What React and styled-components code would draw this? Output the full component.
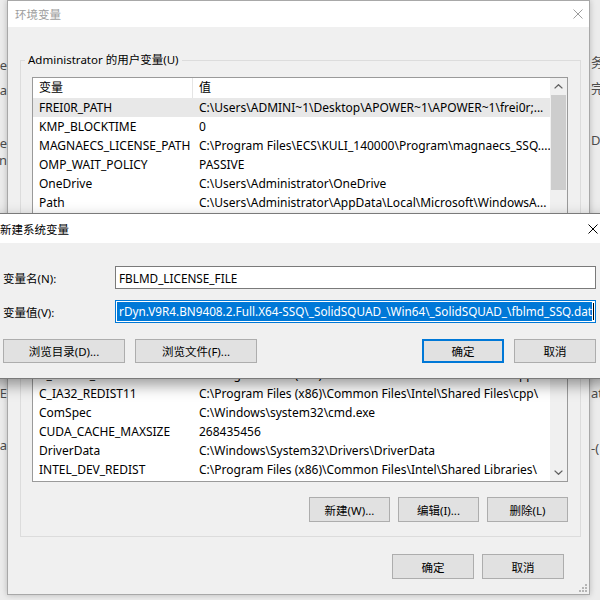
import React from 'react';
import styled, { createGlobalStyle } from 'styled-components';

const GlobalStyle = createGlobalStyle`
  html, body {
    margin: 0;
    padding: 0;
  }
  body {
    font-family: 'Noto Sans', 'Noto Sans CJK SC', sans-serif;
    font-size: 11.5px;
    color: #000;
  }
`;

const Desktop = styled.div`
  position: relative;
  width: 600px;
  height: 600px;
  overflow: hidden;
  background: #ececec;
  display: flex;
  justify-content: space-between;
`;

const Peek = styled.div`
  width: ${(p) => p.$w}px;
  display: flex;
  flex-direction: column;
  align-items: ${(p) => (p.$left ? 'flex-end' : 'flex-start')};
  overflow: hidden;
  color: #4d4d4d;
  font-size: 13px;
  line-height: 16px;
`;

const PeekLine = styled.div`
  margin-top: ${(p) => p.$mt}px;
  white-space: nowrap;
`;

const Window = styled.div`
  position: absolute;
  left: ${(p) => p.$x}px;
  top: ${(p) => p.$y}px;
  width: ${(p) => p.$w}px;
  height: ${(p) => p.$h}px;
  box-sizing: border-box;
  display: flex;
  flex-direction: column;
  background: #f0f0f0;
  border: 1px solid ${(p) => (p.$active ? '#7a7a7a' : '#a8a8a8')};
  box-shadow: ${(p) =>
    p.$active ? '0 6px 14px rgba(0, 0, 0, 0.4)' : '0 0 6px rgba(0, 0, 0, 0.22)'};
`;

const TitleBar = styled.div`
  flex-shrink: 0;
  height: ${(p) => p.$h}px;
  background: #fff;
  display: flex;
  align-items: center;
  justify-content: space-between;
  padding-left: ${(p) => p.$pl}px;
  color: ${(p) => (p.$active ? '#000' : '#9d9d9d')};
  white-space: nowrap;
`;

const CloseGlyph = styled.svg`
  margin-right: ${(p) => p.$mr}px;
  flex-shrink: 0;
`;

const MainBody = styled.div`
  flex: 1;
  display: flex;
  flex-direction: column;
  padding: 0 8px 0 12px;
`;

const GroupBox = styled.fieldset`
  margin: ${(p) => p.$mt}px 0 0;
  padding: 0 12px ${(p) => p.$pb}px 11px;
  border: 1px solid #dcdcdc;
  min-width: 0;
  display: flex;
  flex-direction: column;
`;

const Legend = styled.legend`
  padding: 0 3px;
  margin-left: -7px;
  line-height: 16px;
  white-space: nowrap;
`;

const ListBox = styled.div`
  box-sizing: border-box;
  height: ${(p) => p.$h}px;
  margin-top: ${(p) => p.$mt}px;
  border: 1px solid #9a9a9a;
  background: #fff;
  display: flex;
  overflow: hidden;
  font-size: 12px;
`;

const ListBody = styled.div`
  flex: 1;
  min-width: 0;
  display: flex;
  flex-direction: column;
  overflow: hidden;
`;

const HeaderRow = styled.div`
  flex-shrink: 0;
  display: grid;
  grid-template-columns: 160px 1fr;
  height: 20px;
  line-height: 20px;
`;

const HeaderCell = styled.div`
  box-sizing: border-box;
  padding-left: 6px;
  border-right: ${(p) => (p.$divider ? '1px solid #e5e5e5' : 'none')};
`;

const Row = styled.div`
  flex-shrink: 0;
  display: grid;
  grid-template-columns: 160px 1fr;
  height: 19px;
  line-height: 19px;
  background: ${(p) => (p.$selected ? '#e8e8e8' : 'transparent')};
`;

const Cell = styled.div`
  padding-left: 6px;
  white-space: nowrap;
  overflow: hidden;
`;

const ScrollBar = styled.div`
  width: 17px;
  flex-shrink: 0;
  background: #f0f0f0;
  display: flex;
  flex-direction: column;
`;

const ArrowBox = styled.div`
  height: 17px;
  flex-shrink: 0;
  display: flex;
  align-items: center;
  justify-content: center;
`;

const Track = styled.div`
  flex: 1;
  display: flex;
  flex-direction: column;
  padding-top: ${(p) => p.$offset}px;
`;

const Thumb = styled.div`
  height: ${(p) => p.$h}px;
  margin: 0 1px;
  background: #cdcdcd;
`;

const ButtonRow = styled.div`
  display: flex;
  justify-content: flex-end;
  gap: ${(p) => p.$gap}px;
  margin-top: ${(p) => p.$mt}px;
  padding-right: ${(p) => p.$pr || 0}px;
`;

const Button = styled.button`
  box-sizing: border-box;
  width: ${(p) => p.$w}px;
  height: ${(p) => p.$h}px;
  padding: 0;
  margin: 0;
  margin-left: ${(p) => (p.$push ? 'auto' : '0')};
  background: #e1e1e1;
  border: ${(p) => (p.$default ? '2px solid #0078d7' : '1px solid #adadad')};
  font: inherit;
  color: #000;
  white-space: nowrap;
`;

const DialogBody = styled.div`
  flex: 1;
  display: flex;
  flex-direction: column;
  padding: 23px 13px 0 14px;
`;

const Form = styled.div`
  display: grid;
  grid-template-columns: 112px 1fr;
  row-gap: 11px;
  align-items: center;
`;

const Label = styled.div`
  white-space: nowrap;
`;

const Field = styled.div`
  box-sizing: border-box;
  height: 23px;
  display: flex;
  align-items: center;
  background: #fff;
  border: 1px solid ${(p) => (p.$focused ? '#0078d7' : '#7a7a7a')};
  padding: ${(p) => (p.$focused ? '1px' : '0 3px')};
  overflow: hidden;
  white-space: nowrap;
  font-size: 11.75px;
`;

const Selection = styled.div`
  flex: 1;
  min-width: 0;
  height: 19px;
  line-height: 19px;
  display: flex;
  justify-content: flex-end;
  overflow: hidden;
  background: #0078d7;
  color: #fff;
`;

const Caret = styled.div`
  width: 1px;
  height: 17px;
  margin-left: 1px;
  background: #000;
  flex-shrink: 0;
`;

const Grip = styled.svg`
  position: absolute;
  right: 2px;
  bottom: 2px;
`;

const userVars = [
  ['FREI0R_PATH', 'C:\\Users\\ADMINI~1\\Desktop\\APOWER~1\\APOWER~1\\frei0r;...'],
  ['KMP_BLOCKTIME', '0'],
  ['MAGNAECS_LICENSE_PATH', 'C:\\Program Files\\ECS\\KULI_140000\\Program\\magnaecs_SSQ....'],
  ['OMP_WAIT_POLICY', 'PASSIVE'],
  ['OneDrive', 'C:\\Users\\Administrator\\OneDrive'],
  ['Path', 'C:\\Users\\Administrator\\AppData\\Local\\Microsoft\\WindowsA...'],
  ['TEMP', 'C:\\Users\\Administrator\\AppData\\Local\\Temp'],
  ['TMP', 'C:\\Users\\Administrator\\AppData\\Local\\Temp'],
];

const systemVars = [
  ['asl.log', 'Destination=file'],
  ['CAMPUS_LICENSE', 'C:\\Program Files\\Campus\\license.dat'],
  ['C_EM64T_REDIST11', 'C:\\Program Files (x86)\\Common Files\\Intel\\Shared Files\\cpp\\'],
  ['C_IA32_REDIST11', 'C:\\Program Files (x86)\\Common Files\\Intel\\Shared Files\\cpp\\'],
  ['ComSpec', 'C:\\Windows\\system32\\cmd.exe'],
  ['CUDA_CACHE_MAXSIZE', '268435456'],
  ['DriverData', 'C:\\Windows\\System32\\Drivers\\DriverData'],
  ['INTEL_DEV_REDIST', 'C:\\Program Files (x86)\\Common Files\\Intel\\Shared Libraries\\'],
];

const Chevron = ({ up }) => (
  <svg width="9" height="5" viewBox="0 0 9 5">
    <path
      d={up ? 'M0.6 4.4 L4.5 0.7 L8.4 4.4' : 'M0.6 0.6 L4.5 4.3 L8.4 0.6'}
      fill="none"
      stroke="#606060"
      strokeWidth="1.3"
    />
  </svg>
);

const CloseX = ({ color, mr }) => (
  <CloseGlyph $mr={mr} width="10" height="10" viewBox="0 0 10 10">
    <path d="M0.5 0.5 L9.5 9.5 M9.5 0.5 L0.5 9.5" stroke={color} strokeWidth="1" />
  </CloseGlyph>
);

const VarList = ({ rows, height, mt, thumbOffset, thumbHeight, selected }) => (
  <ListBox $h={height} $mt={mt}>
    <ListBody>
      <HeaderRow>
        <HeaderCell $divider>变量</HeaderCell>
        <HeaderCell>值</HeaderCell>
      </HeaderRow>
      {rows.map(([name, value], i) => (
        <Row key={name} $selected={i === selected}>
          <Cell>{name}</Cell>
          <Cell>{value}</Cell>
        </Row>
      ))}
    </ListBody>
    <ScrollBar>
      <ArrowBox>
        <Chevron up />
      </ArrowBox>
      <Track $offset={thumbOffset}>
        <Thumb $h={thumbHeight} />
      </Track>
      <ArrowBox>
        <Chevron />
      </ArrowBox>
    </ScrollBar>
  </ListBox>
);

const App = () => {
  return (
    <>
      <GlobalStyle />
      <Desktop>
        <Peek $w={7} $left>
          <PeekLine $mt={57}>Name</PeekLine>
          <PeekLine $mt={9}>Data</PeekLine>
          <PeekLine $mt={37}>Re</PeekLine>
          <PeekLine $mt={1}>Run</PeekLine>
          <PeekLine $mt={217}>FILE</PeekLine>
          <PeekLine $mt={36}>Data</PeekLine>
        </Peek>
        <Peek $w={9}>
          <PeekLine $mt={54}>务</PeekLine>
          <PeekLine $mt={10}>完</PeekLine>
          <PeekLine $mt={36}>D</PeekLine>
          <PeekLine $mt={237}>at</PeekLine>
          <PeekLine $mt={39}>-(</PeekLine>
        </Peek>

        <Window $x={7} $y={0} $w={583} $h={595}>
          <TitleBar $h={26} $pl={7}>
            环境变量
            <CloseX color="#9d9d9d" mr={6} />
          </TitleBar>
          <MainBody>
            <GroupBox $mt={25} $pb={10}>
              <Legend>Administrator 的用户变量(U)</Legend>
              <VarList
                rows={userVars}
                height={154}
                mt={9}
                thumbOffset={0}
                thumbHeight={95}
                selected={0}
              />
              <ButtonRow $gap={8} $mt={10}>
                <Button $w={81} $h={25}>新建(N)...</Button>
                <Button $w={81} $h={25}>编辑(E)...</Button>
                <Button $w={81} $h={25}>删除(D)</Button>
              </ButtonRow>
            </GroupBox>

            <GroupBox $mt={6} $pb={14}>
              <Legend>系统变量(S)</Legend>
              <VarList
                rows={systemVars}
                height={176}
                mt={7}
                thumbOffset={4}
                thumbHeight={40}
                selected={-1}
              />
              <ButtonRow $gap={8} $mt={15}>
                <Button $w={81} $h={25}>新建(W)...</Button>
                <Button $w={81} $h={25}>编辑(I)...</Button>
                <Button $w={81} $h={25}>删除(L)</Button>
              </ButtonRow>
            </GroupBox>

            <ButtonRow $gap={8} $mt={17} $pr={17}>
              <Button $w={82} $h={25}>确定</Button>
              <Button $w={82} $h={25}>取消</Button>
            </ButtonRow>
          </MainBody>
          <Grip width="8" height="8" viewBox="0 0 8 8">
            <g fill="#b5b5b5">
              <rect x="6" y="0" width="2" height="2" />
              <rect x="3" y="3" width="2" height="2" />
              <rect x="6" y="3" width="2" height="2" />
              <rect x="0" y="6" width="2" height="2" />
              <rect x="3" y="6" width="2" height="2" />
              <rect x="6" y="6" width="2" height="2" />
            </g>
          </Grip>
        </Window>

        <Window $x={-12} $y={213} $w={622} $h={166} $active>
          <TitleBar $h={29} $pl={11} $active>
            新建系统变量
            <CloseX color="#000" mr={11} />
          </TitleBar>
          <DialogBody>
            <Form>
              <Label>变量名(N):</Label>
              <Field>FBLMD_LICENSE_FILE</Field>
              <Label>变量值(V):</Label>
              <Field $focused>
                <Selection>
                  rDyn.V9R4.BN9408.2.Full.X64-SSQ\_SolidSQUAD_\Win64\_SolidSQUAD_\fblmd_SSQ.dat
                </Selection>
                <Caret />
              </Field>
            </Form>
            <ButtonRow $gap={10} $mt={16}>
              <Button $w={122} $h={24}>浏览目录(D)...</Button>
              <Button $w={122} $h={24}>浏览文件(F)...</Button>
              <Button $w={82} $h={24} $push $default>确定</Button>
              <Button $w={82} $h={24}>取消</Button>
            </ButtonRow>
          </DialogBody>
        </Window>
      </Desktop>
    </>
  );
};

export default App;
